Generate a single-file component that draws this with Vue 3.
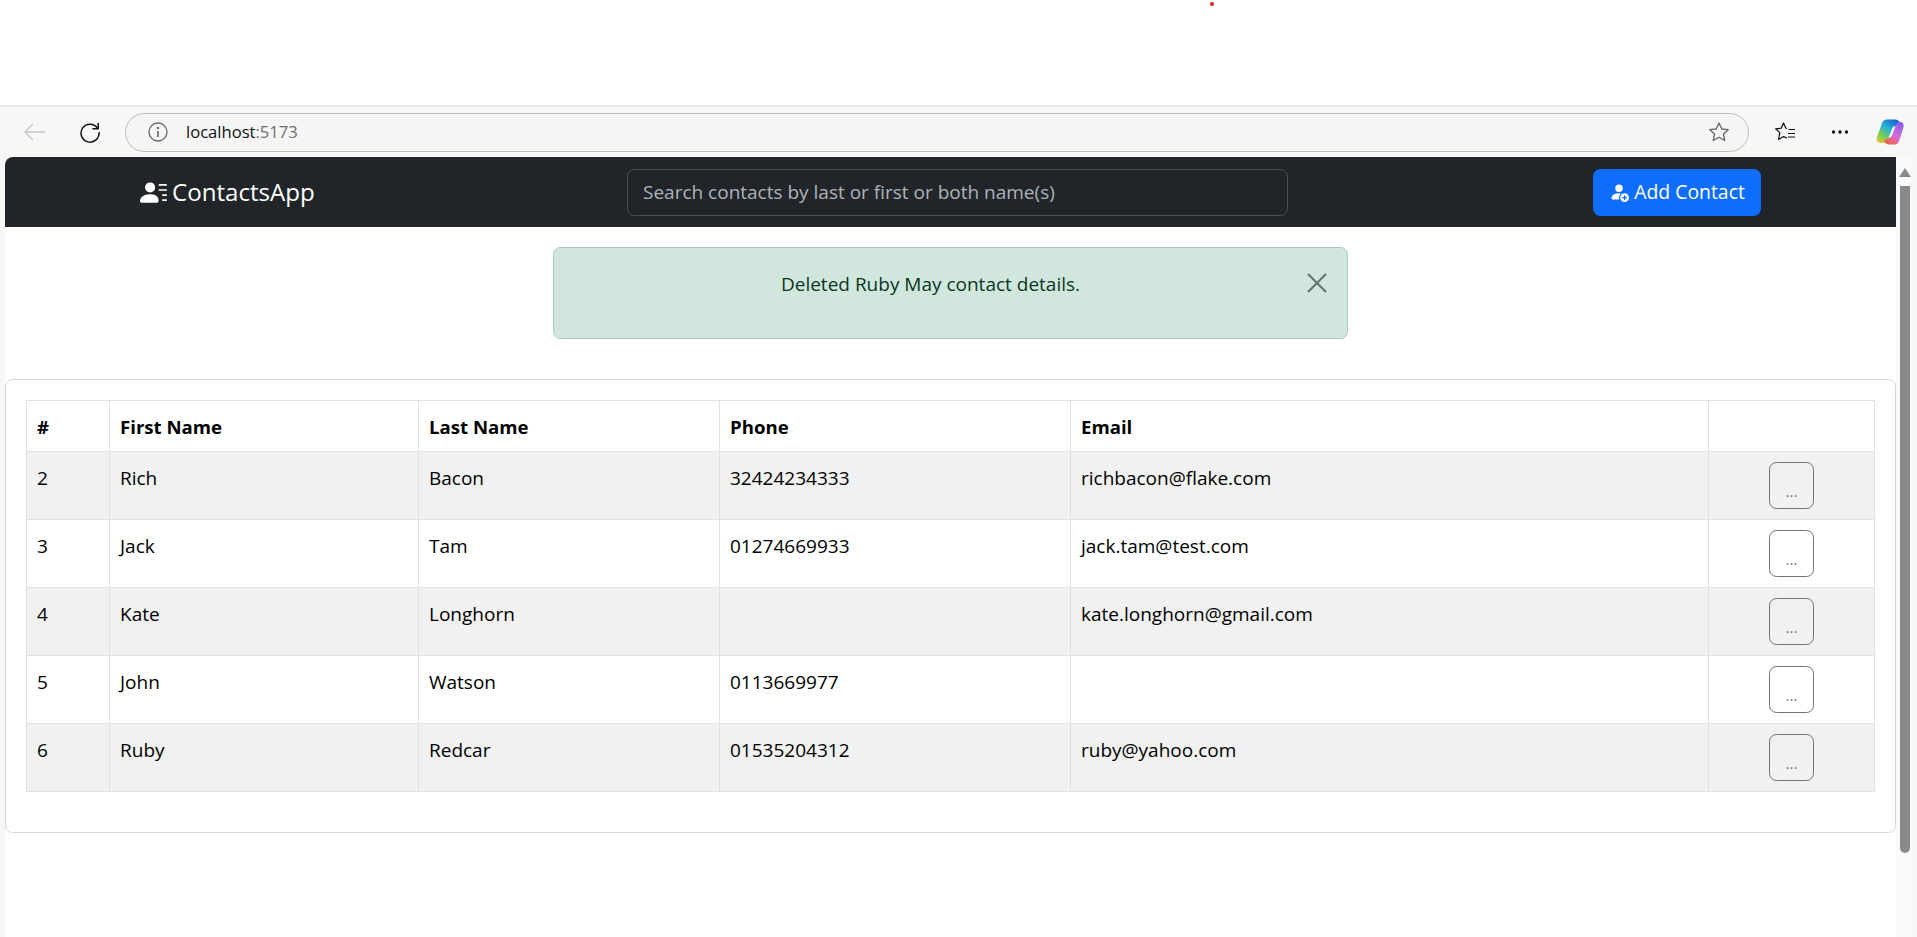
<script setup>
// contacts shown in the table
const contacts = [
  { id: 2, first: 'Rich', last: 'Bacon', phone: '32424234333', email: 'richbacon@flake.com' },
  { id: 3, first: 'Jack', last: 'Tam', phone: '01274669933', email: 'jack.tam@test.com' },
  { id: 4, first: 'Kate', last: 'Longhorn', phone: '', email: 'kate.longhorn@gmail.com' },
  { id: 5, first: 'John', last: 'Watson', phone: '0113669977', email: '' },
  { id: 6, first: 'Ruby', last: 'Redcar', phone: '01535204312', email: 'ruby@yahoo.com' }
]
</script>

<template>
  <div class="screen">
    <div class="top-strip"><span class="red-dot"></span></div>

    <div class="browser-bar">
      <svg class="back" width="24" height="20" viewBox="0 0 24 20" fill="none" stroke="#c4c4c4" stroke-width="1.3">
        <path d="M2 10h20M10 2l-8 8 8 8" />
      </svg>
      <svg class="reload" width="22" height="22" viewBox="0 0 22 22" fill="none" stroke="#111" stroke-width="1.5">
        <path d="M18.6 7.2A9 9 0 1 0 20 11" />
        <path d="M19.2 2v5.8h-5.8" />
      </svg>
      <div class="address">
        <svg width="20" height="20" viewBox="0 0 20 20" fill="none" stroke="#666" stroke-width="1.3">
          <circle cx="10" cy="10" r="9" />
          <path d="M10 9v6" stroke-width="1.6" />
          <circle cx="10" cy="6" r=".6" fill="#666" />
        </svg>
        <span class="url">localhost<span class="port">:5173</span></span>
        <svg class="star" width="22" height="22" viewBox="0 0 22 22" fill="none" stroke="#666" stroke-width="1.3">
          <path d="M11 2l2.8 6 6.4.7-4.8 4.4 1.4 6.4L11 16.2l-5.8 3.3 1.4-6.4-4.8-4.4L8.2 8z" stroke-linejoin="round" />
        </svg>
      </div>
      <svg class="favs" width="22" height="22" viewBox="0 0 22 22" fill="none" stroke="#111" stroke-width="1.2">
        <path d="M13 7.5l-1.1-.3L9.5 2 7.2 7.2l-5.6.6 4.2 3.8-1.2 6.9 4.9-2.9 3.5 1.4" stroke-linejoin="round" />
        <path d="M14.5 8.5H21M14 12.5h7M14 16h7" />
      </svg>
      <svg class="more" width="18" height="6" viewBox="0 0 18 6" fill="#111">
        <circle cx="2.5" cy="3" r="1.7" />
        <circle cx="9" cy="3" r="1.7" />
        <circle cx="15.5" cy="3" r="1.7" />
      </svg>
      <svg class="copilot" width="30" height="28" viewBox="0 0 30 28">
        <defs>
          <linearGradient id="cpLeft" x1="0.8" y1="0" x2="0.1" y2="1">
            <stop offset="0" stop-color="#1a5fd0" />
            <stop offset="0.4" stop-color="#24b4d8" />
            <stop offset="0.75" stop-color="#7fd04a" />
            <stop offset="1" stop-color="#f2c230" />
          </linearGradient>
          <linearGradient id="cpRight" x1="0.8" y1="0" x2="0.2" y2="1">
            <stop offset="0" stop-color="#8a5cf0" />
            <stop offset="0.55" stop-color="#d86ad8" />
            <stop offset="1" stop-color="#f2603c" />
          </linearGradient>
        </defs>
        <path d="M11 1.5h8c2.5 0 4 1.5 5 3.5l-4 3c-2.5 0-3.5 1.5-4.5 4l-3 8c-1 3-3 5-6 5H4.500c-3 0-4.500-3-3.500-6L6 5c1-2.300 2.500-3.500 5-3.500z" fill="url(#cpLeft)" />
        <path d="M19 26.500h-6c-2.500 0-4-1.500-5-3.500l4-3c2.500 0 3.500-1.500 4.500-4l3-8c.8-2.500 2-4 4-4h1c2.500 0 3.500 2.500 3 5l-4 13c-1 3-2.500 4.500-4.500 4.500z" fill="url(#cpRight)" />
      </svg>
    </div>

    <div class="viewport">
      <main class="page">
        <nav class="navbar">
          <a class="brand">
            <svg width="27" height="27" viewBox="0 0 16 16" fill="#fff">
              <path d="M6 8a3 3 0 1 0 0-6 3 3 0 0 0 0 6m-5 6s-1 0-1-1 1-4 6-4 5 3 5 4-1 1-1 1zM11 3.5a.5.5 0 0 1 .5-.5h4a.5.5 0 0 1 0 1h-4a.5.5 0 0 1-.5-.5m.5 2.5a.5.5 0 0 0 0 1h4a.5.5 0 0 0 0-1zm2 3a.5.5 0 0 0 0 1h2a.5.5 0 0 0 0-1zm0 3a.5.5 0 0 0 0 1h2a.5.5 0 0 0 0-1z" />
            </svg>
            ContactsApp
          </a>
          <input class="search" type="text" placeholder="Search contacts by last or first or both name(s)" />
          <button class="add-btn">
            <svg width="20" height="20" viewBox="0 0 16 16" fill="#fff">
              <path d="M12.5 16a3.5 3.5 0 1 0 0-7 3.5 3.5 0 0 0 0 7m.5-5v1h1a.5.5 0 0 1 0 1h-1v1a.5.5 0 0 1-1 0v-1h-1a.5.5 0 0 1 0-1h1v-1a.5.5 0 0 1 1 0m-2-6a3 3 0 1 1-6 0 3 3 0 0 1 6 0" />
              <path d="M2 13c0 1 1 1 1 1h5.256A4.5 4.5 0 0 1 8 12.5a4.5 4.5 0 0 1 1.544-3.393Q8.844 9.002 8 9c-5 0-6 3-6 4" />
            </svg>
            Add Contact
          </button>
        </nav>

        <div class="alert">
          <p>Deleted Ruby May contact details.</p>
          <button class="close" aria-label="Close">
            <svg width="20" height="20" viewBox="0 0 20 20" fill="none" stroke="#66756f" stroke-width="2.2">
              <path d="M1 1l18 18M19 1L1 19" />
            </svg>
          </button>
        </div>

        <section class="card">
          <table class="contacts">
            <colgroup>
              <col class="c-id" />
              <col class="c-first" />
              <col class="c-last" />
              <col class="c-phone" />
              <col class="c-email" />
              <col class="c-act" />
            </colgroup>
            <thead>
              <tr>
                <th>#</th>
                <th>First Name</th>
                <th>Last Name</th>
                <th>Phone</th>
                <th>Email</th>
                <th></th>
              </tr>
            </thead>
            <tbody>
              <tr v-for="c in contacts" :key="c.id">
                <td>{{ c.id }}</td>
                <td>{{ c.first }}</td>
                <td>{{ c.last }}</td>
                <td>{{ c.phone }}</td>
                <td>{{ c.email }}</td>
                <td class="act"><button class="more-btn">...</button></td>
              </tr>
            </tbody>
          </table>
        </section>
      </main>

      <div class="scrollbar">
        <span class="arrow"></span>
        <span class="thumb"></span>
      </div>
    </div>
  </div>
</template>

<style>
html, body {
  margin: 0;
  background: #fff;
  overflow: hidden;
}
</style>

<style scoped>
.screen {
  width: 1917px;
  height: 937px;
  display: flex;
  flex-direction: column;
  overflow: hidden;
  font-family: "Open Sans", "Noto Sans", sans-serif;
  font-size: 19px;
  line-height: 30px;
  color: #000;
  background: #f7f7f7;
}

.top-strip {
  height: 105px;
  background: #fff;
  position: relative;
}

.red-dot {
  position: absolute;
  left: 1210px;
  top: 2px;
  width: 4px;
  height: 4px;
  border-radius: 50%;
  background: #f01c24;
}

.browser-bar {
  height: 52px;
  box-sizing: border-box;
  border-top: 2px solid #e9e9e9;
  display: flex;
  align-items: center;
  padding-left: 23px;
}

.reload {
  margin-left: 32px;
}

.address {
  margin-left: 24px;
  width: 1624px;
  height: 39px;
  box-sizing: border-box;
  border: 1.5px solid #bdbdbd;
  border-radius: 20px;
  background: #f5f5f5;
  display: flex;
  align-items: center;
  padding-left: 22px;
  padding-right: 18px;
}

.url {
  margin-left: 18px;
  font-size: 16.6px;
  color: #111;
}

.port {
  color: #6f6f6f;
}

.star {
  margin-left: auto;
}

.favs {
  margin-left: 25px;
}

.more {
  margin-left: 35px;
}

.copilot {
  margin-left: 27px;
}

.viewport {
  flex: 1;
  display: flex;
  padding-left: 5px;
  padding-right: 4px;
  min-height: 0;
}

.page {
  width: 1891px;
  background: #fff;
  border-top-left-radius: 8px;
  overflow: hidden;
}

.navbar {
  height: 70px;
  background: #212529;
  display: flex;
  align-items: center;
  padding-left: 135px;
  padding-right: 135px;
}

.brand {
  width: 487px;
  display: flex;
  align-items: center;
  gap: 5px;
  color: #fff;
  font-size: 24.1px;
}

.search {
  width: 661px;
  height: 47px;
  box-sizing: border-box;
  border: 1px solid #495057;
  border-radius: 7.5px;
  background: #212529;
  padding: 0 15px;
  color: #dee2e6;
  font: inherit;
  outline: none;
}

.search::placeholder {
  color: rgba(222, 226, 230, 0.75);
}

.add-btn {
  margin-left: auto;
  width: 168px;
  height: 47px;
  border: 0;
  border-radius: 7.5px;
  background: #0d6efd;
  color: #fff;
  font: inherit;
  font-size: 19.4px;
  display: flex;
  align-items: center;
  justify-content: center;
  gap: 5px;
  padding: 0;
}

.alert {
  position: relative;
  box-sizing: border-box;
  width: 795px;
  height: 92px;
  margin: 20px 0 40px 548px;
  padding: 21px 60px 19px 20px;
  border: 1px solid #a3cfbb;
  border-radius: 7.5px;
  background: #d1e7dd;
  color: #0a3622;
  text-align: center;
}

.alert p {
  margin: 0;
}

.close {
  position: absolute;
  top: 20px;
  right: 15px;
  width: 30px;
  height: 30px;
  padding: 0;
  border: 0;
  background: none;
  display: flex;
  align-items: center;
  justify-content: center;
}

.card {
  border: 1px solid #d3d5d8;
  border-radius: 7.5px;
  padding: 20px 20px 40px;
  height: 454px;
  box-sizing: border-box;
}

.contacts {
  width: 1848px;
  table-layout: fixed;
  border-collapse: collapse;
  background: #fff;
}

.c-id { width: 83px; }
.c-first { width: 309px; }
.c-last { width: 301px; }
.c-phone { width: 351px; }
.c-email { width: 638px; }
.c-act { width: 166px; }

.contacts th,
.contacts td {
  border: 1px solid #dee2e6;
  padding: 11px 10px 9px;
  text-align: left;
  vertical-align: top;
  height: 30px;
}

.contacts th {
  font-weight: 700;
  font-size: 18.6px;
}

.contacts td {
  height: 47px;
}

.contacts tbody tr:nth-child(odd) td {
  background: #f1f1f1;
}

.contacts td.act {
  padding: 10px;
  text-align: center;
}

.more-btn {
  display: block;
  margin: 0 auto;
  width: 45px;
  height: 47px;
  padding: 11px 0 0;
  border: 1px solid #6c757d;
  border-radius: 7.5px;
  background: transparent;
  color: #6c757d;
  font-size: 15px;
  font-family: inherit;
  line-height: 26px;
  box-sizing: border-box;
}

.scrollbar {
  width: 17px;
  background: #fafafa;
  border-top-right-radius: 8px;
  display: flex;
  flex-direction: column;
  align-items: center;
  padding-top: 11px;
}

.arrow {
  width: 0;
  height: 0;
  border-left: 6px solid transparent;
  border-right: 6px solid transparent;
  border-bottom: 9px solid #8a8a8a;
}

.thumb {
  width: 10px;
  height: 667px;
  margin-top: 9px;
  background: #8a8a8a;
  border-radius: 0 0 5px 5px;
}
</style>
